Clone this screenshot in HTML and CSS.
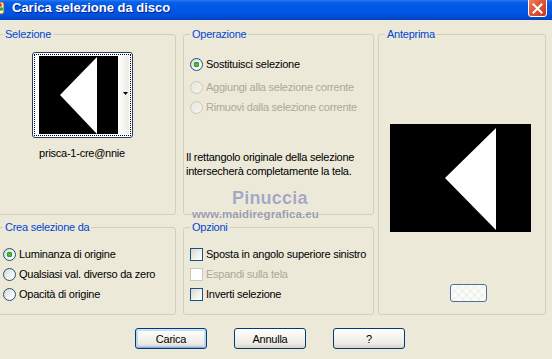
FILE: index.html
```html
<!DOCTYPE html>
<html lang="it">
<head>
<meta charset="utf-8">
<title>Carica selezione da disco</title>
<link rel="stylesheet" href="styles.css">
</head>
<body>
<div class="window">
  <div class="titlebar">
    <span class="app-icon">
      <svg width="16" height="16" viewBox="0 0 16 16"><rect x="2" y="2" width="13" height="12" rx="2" fill="#f4f0e0" stroke="#7a5a30"/><circle cx="11" cy="5" r="2" fill="#e8462a"/><circle cx="12.5" cy="9" r="1.8" fill="#3aa83a"/><circle cx="9" cy="11" r="1.6" fill="#f0c020"/></svg>
    </span>
    <span class="title">Carica selezione da disco</span>
    <span class="close">
      <svg width="11" height="11" viewBox="0 0 11 11"><path d="M1.5 1.5 L9.5 9.5 M9.5 1.5 L1.5 9.5" stroke="#fff" stroke-width="2" stroke-linecap="square"/></svg>
    </span>
  </div>

  <div class="client">
    <div class="groups">
      <fieldset class="group g-sel">
        <legend>Selezione</legend>
        <div class="thumb">
          <div class="thumb-focus">
            <svg class="thumb-img" width="79" height="78" viewBox="0 0 79 78"><rect width="79" height="78" fill="#000"/><polygon points="21,39 58,1 58,78" fill="#fff"/></svg>
            <div class="thumb-strip">
              <svg width="5" height="3" viewBox="0 0 5 3"><polygon points="0,0 5,0 2.5,3" fill="#000"/></svg>
            </div>
          </div>
        </div>
        <div class="thumb-name">prisca-1-cre@nnie</div>
      </fieldset>

      <fieldset class="group g-op">
        <legend>Operazione</legend>
        <div class="row first"><span class="radio on"></span><span>Sostituisci selezione</span></div>
        <div class="row disabled"><span class="radio dis"></span><span>Aggiungi alla selezione corrente</span></div>
        <div class="row disabled"><span class="radio dis"></span><span>Rimuovi dalla selezione corrente</span></div>
        <p class="note">Il rettangolo originale della selezione intersecherà completamente la tela.</p>
      </fieldset>

      <fieldset class="group g-prev">
        <legend>Anteprima</legend>
        <svg class="preview" width="141" height="108" viewBox="0 0 141 108"><rect width="141" height="108" fill="#000"/><polygon points="55,54 106,4 106,106" fill="#fff"/></svg>
        <div class="mini-btn"></div>
      </fieldset>

      <fieldset class="group g-crea">
        <legend>Crea selezione da</legend>
        <div class="row top"><span class="radio on"></span><span>Luminanza di origine</span></div>
        <div class="row"><span class="radio"></span><span>Qualsiasi val. diverso da zero</span></div>
        <div class="row"><span class="radio"></span><span>Opacità di origine</span></div>
      </fieldset>

      <fieldset class="group g-opt">
        <legend>Opzioni</legend>
        <div class="row top"><span class="check"></span><span>Sposta in angolo superiore sinistro</span></div>
        <div class="row disabled"><span class="check dis"></span><span>Espandi sulla tela</span></div>
        <div class="row"><span class="check"></span><span>Inverti selezione</span></div>
      </fieldset>

      <div class="wm-name">Pinuccia</div>
      <div class="wm-url">www.maidiregrafica.eu</div>
    </div>

    <div class="buttons">
      <button class="btn default">Carica</button>
      <button class="btn">Annulla</button>
      <button class="btn">?</button>
    </div>
  </div>
</div>
</body>
</html>
```

FILE: styles.css
```css
html, body {
  margin: 0;
  padding: 0;
}
body {
  width: 552px;
  height: 359px;
  overflow: hidden;
  background: #ece9d8;
  font-family: "Liberation Sans", Arial, sans-serif;
  font-size: 11px;
  line-height: 13px;
  letter-spacing: -0.25px;
  color: #000;
}

.titlebar {
  height: 20px;
  display: flex;
  align-items: flex-start;
  background: linear-gradient(to bottom, #2a7cf5 0px, #0a62ea 2px, #0058e6 6px, #0056e5 12px, #004ed8 16px, #0047cc 19px, #0a3fae 20px);
}
.app-icon {
  display: block;
  width: 16px;
  height: 16px;
  margin: 0 7px 0 -11px;
}
.title {
  font-weight: bold;
  font-size: 13px;
  line-height: 15px;
  letter-spacing: 0;
  color: #fff;
  text-shadow: 1px 1px 0 #0a1f8a;
  flex: 1;
}
.close {
  width: 19px;
  height: 21px;
  box-sizing: border-box;
  margin: -4px 5px 0 0;
  border: 1px solid #fff;
  border-radius: 3px;
  background: linear-gradient(135deg, #f08c6a 0%, #e2583a 45%, #c8381c 100%);
  display: flex;
  align-items: center;
  justify-content: center;
  padding-top: 3px;
}

.groups {
  position: relative;
  margin: 8px 0 0 -4px;
  display: grid;
  grid-template-columns: 180px 7px 191px 4px 168px;
  grid-template-rows: 187px 6px 94px;
}
.group {
  margin: 0;
  padding: 0 6px;
  min-width: 0;
  border: 1px solid #d0d0bf;
  border-radius: 3px;
}
.group legend {
  padding: 0 2px;
  color: #0046d5;
}
.g-sel { grid-column: 1; grid-row: 1; display: flex; flex-direction: column; align-items: center; padding: 11px 14px 0 6px; }
.g-op { grid-column: 3; grid-row: 1; padding-top: 13px; }
.g-prev { grid-column: 5; grid-row: 1 / 4; }
.g-crea { grid-column: 1; grid-row: 3; }
.g-opt { grid-column: 3; grid-row: 3; }

.thumb {
  display: flex;
  width: 101px;
  height: 86px;
  box-sizing: border-box;
  border: 1px solid #1f3d6a;
  border-radius: 3px;
  padding: 1px;
  background: #fff;
}
.thumb-focus {
  flex: 1;
  display: flex;
  border: 1px dotted #000;
  padding: 1px 1px 1px 4px;
}
.thumb-img { display: block; flex: none; }
.thumb-strip {
  flex: 1;
  display: flex;
  align-items: center;
  justify-content: flex-end;
  padding-right: 1px;
  padding-bottom: 3px;
  background: linear-gradient(to right, #ffffff, #ecebe6);
}
.thumb-strip svg { display: block; }
.thumb-name { margin-top: 9px; }

.row {
  display: flex;
  align-items: center;
  gap: 3px;
  height: 20px;
}
.row.first { margin-bottom: 3px; }
.row.top { margin-top: 10px; }
.row.disabled { color: #aca899; }

.radio {
  flex: none;
  width: 13px;
  height: 13px;
  box-sizing: border-box;
  border-radius: 50%;
  border: 1px solid #1c5180;
  background: linear-gradient(135deg, #d8d7cf 0%, #f3f3ef 60%, #ffffff 100%);
}
.radio.on {
  background: radial-gradient(circle at 50% 50%, #5fd35f 0, #2fa52f 2px, #1f8c1f 2.6px, rgba(255,255,255,0) 3px), linear-gradient(135deg, #d8d7cf 0%, #f3f3ef 60%, #ffffff 100%);
}
.radio.dis {
  border-color: #cac8bb;
  background: linear-gradient(135deg, #e9e7dd, #f5f4ee);
}
.check {
  flex: none;
  width: 13px;
  height: 13px;
  box-sizing: border-box;
  border: 1px solid #1c5180;
  background: linear-gradient(135deg, #d8d7cf 0%, #f3f3ef 60%, #ffffff 100%);
}
.check.dis {
  border-color: #cac8bb;
  background: #fff;
}

.note {
  margin: 33px 0 0 -4px;
  line-height: 14px;
}

.preview {
  display: block;
  margin: 83px 0 0 5px;
}
.mini-btn {
  width: 37px;
  height: 18px;
  box-sizing: border-box;
  margin: 52px 0 0 65px;
  border: 1px solid #4f6f9e;
  border-radius: 3px;
  background:
    repeating-conic-gradient(#f2f2ee 0 25%, #fbfbf8 0 50%) 50% 50% / 8px 8px,
    #f6f6f2;
}

.wm-name {
  position: absolute;
  left: 236px;
  top: 161px;
  font-weight: bold;
  font-size: 18px;
  line-height: 19px;
  letter-spacing: 0.2px;
  color: #a4a7c2;
  text-shadow: 0 0 1px #ffffff;
}
.wm-url {
  position: absolute;
  left: 196px;
  top: 181px;
  font-weight: bold;
  font-size: 11.5px;
  line-height: 10px;
  letter-spacing: 0.1px;
  color: #9a9bab;
  text-shadow: 0 0 1px #ffffff;
}

.buttons {
  display: flex;
  gap: 27px;
  padding-left: 135px;
  margin-top: 13px;
}
.btn {
  width: 72px;
  height: 21px;
  box-sizing: border-box;
  margin: 0;
  padding: 0;
  border: 1px solid #003c74;
  border-radius: 3px;
  background: linear-gradient(to bottom, #ffffff 0%, #f7f6f2 35%, #ecebe5 75%, #d9d4c9 100%);
  font-family: inherit;
  font-size: 11px;
  letter-spacing: -0.25px;
  color: #000;
}
.btn.default {
  box-shadow: inset 0 1px 0 #cee7ff, inset 1px 0 0 #bcd4f6, inset -1px 0 0 #bcd4f6, inset 0 -1px 0 #89a8ee, inset 0 0 0 2px rgba(160, 190, 240, 0.55);
}
```
